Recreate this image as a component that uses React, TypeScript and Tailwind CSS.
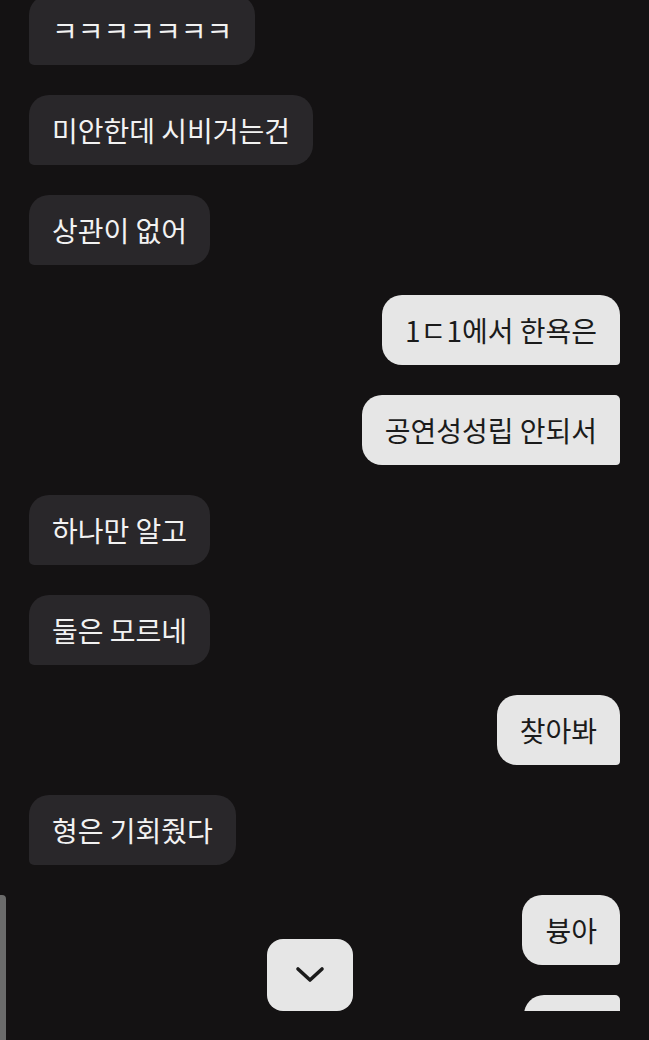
import React from 'react';

type Message = { text: string; mine: boolean; cont?: boolean; width?: string };

const messages: Message[] = [
  { text: 'ㅋㅋㅋㅋㅋㅋㅋ', mine: false },
  { text: '미안한데 시비거는건', mine: false },
  { text: '상관이 없어', mine: false },
  { text: '1ㄷ1에서 한욕은', mine: true },
  { text: '공연성성립 안되서', mine: true, cont: true },
  { text: '하나만 알고', mine: false },
  { text: '둘은 모르네', mine: false },
  { text: '찾아봐', mine: true },
  { text: '형은 기회줬다', mine: false },
  { text: '븅아', mine: true },
  { text: '', mine: true, cont: true, width: 'w-[96px]' },
];

const Bubble: React.FC<{ msg: Message }> = ({ msg }) => (
  <div className={`flex ${msg.mine ? 'justify-end' : 'justify-start'}`}>
    <div
      className={`h-[70px] flex items-center px-[23px] text-[28px] whitespace-nowrap ${msg.width ?? ''} ${
        msg.mine
          ? 'bg-[#e6e6e6] text-[#1b1b1b] rounded-[20px] rounded-br-[4px]'
          : 'bg-[#29272a] text-[#f2f2f2] rounded-[20px] rounded-bl-[5px]'
      } ${msg.mine && msg.cont ? 'rounded-tr-[5px]' : ''}`}
    >
      {msg.text}
    </div>
  </div>
);

export default function App() {
  return (
    <div
      className="relative w-[649px] h-[1040px] bg-[#141213] overflow-hidden"
      style={{ fontFamily: '"Noto Sans CJK KR", "Noto Sans", sans-serif' }}
    >
      {/* 대화 영역 */}
      <div className="h-[1011px] overflow-hidden px-[29px]">
        <div className="-mt-[5px] flex flex-col gap-[30px]">
          {messages.map((m, i) => (
            <Bubble key={i} msg={m} />
          ))}
        </div>
      </div>

      {/* 스크롤바 */}
      <div className="absolute left-0 top-[895px] w-[6px] h-[160px] bg-[#6b6b6b] rounded-tr-[4px]" />

      {/* 아래로 버튼 */}
      <button className="absolute left-[267px] top-[939px] w-[86px] h-[72px] bg-[#e6e6e6] rounded-[16px] flex items-center justify-center">
        <svg width="30" height="18" viewBox="0 0 30 18" fill="none">
          <path d="M3 3 L15 14 L27 3" stroke="#1b1b1b" strokeWidth="3.6" strokeLinecap="round" strokeLinejoin="round" />
        </svg>
      </button>
    </div>
  );
}
